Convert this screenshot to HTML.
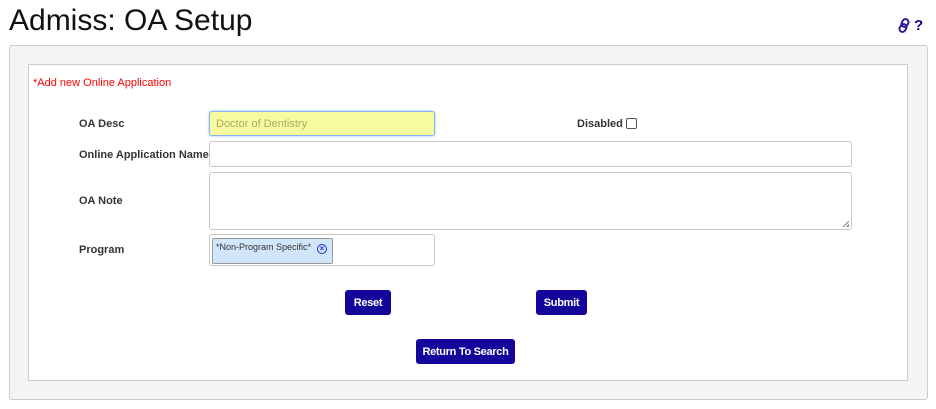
<!DOCTYPE html>
<html><head><style>
body{margin:0;width:936px;height:409px;background:#fff;font-family:"Liberation Sans",sans-serif;position:relative;overflow:hidden}
.a{position:absolute;white-space:nowrap}
h1{position:absolute;left:9px;top:4px;margin:0;font-weight:normal;font-size:30px;color:#111;letter-spacing:0px}
.outer{left:9px;top:45px;width:917px;height:353px;border:1px solid #ccc;border-radius:3px;background:#f4f4f4}
.inner{left:28px;top:64px;width:878px;height:315px;border:1px solid #ccc;background:#fff}
.lbl{font-size:11px;font-weight:bold;color:#333}
.in{border:1px solid #c8c8c8;border-radius:3px;background:#fff;box-sizing:border-box}
.btn{background:#14069a;color:#fff;font-size:11px;font-weight:bold;border-radius:3px;text-align:center;line-height:26px;height:25px;letter-spacing:-0.3px}
</style></head><body>
<h1>Admiss: OA Setup</h1>
<svg class="a" style="left:897px;top:18px" width="14" height="15" viewBox="0 0 14 15"><g fill="none" stroke="#2a1aa0" stroke-width="2"><rect x="5" y="1" width="6" height="8" rx="3" transform="rotate(30 8 5)"/><rect x="3" y="6" width="6" height="8" rx="3" transform="rotate(30 6 10)"/></g></svg>
<div class="a" style="left:914px;top:17px;font-size:15px;color:#14069a;font-weight:bold">?</div>
<div class="a outer"></div>
<div class="a inner"></div>
<div class="a" style="left:33px;top:77px;font-size:11px;color:#f00">*Add new Online Application</div>
<div class="a lbl" style="left:79px;top:118px">OA Desc</div>
<div class="a in" style="left:209px;top:111px;width:226px;height:25px;background:#f7fba0;border:1px solid #8ab4f0;box-shadow:0 0 2px #8ab4f0"></div>
<div class="a" style="left:216px;top:118px;font-size:11px;color:#aaa86a">Doctor of Dentistry</div>
<div class="a lbl" style="left:577px;top:118px">Disabled</div>
<div class="a" style="left:626px;top:118px;width:9px;height:9px;border:1px solid #555;border-radius:2px"></div>
<div class="a lbl" style="left:79px;top:149px">Online Application Name</div>
<div class="a in" style="left:209px;top:141px;width:643px;height:26px"></div>
<div class="a lbl" style="left:79px;top:195px">OA Note</div>
<div class="a in" style="left:209px;top:172px;width:643px;height:58px"></div>
<div class="a" style="left:843px;top:221px;width:6px;height:6px;background:linear-gradient(135deg,transparent 45%,#888 45%,#888 55%,transparent 55%,transparent 75%,#888 75%)"></div>
<div class="a lbl" style="left:79px;top:244px">Program</div>
<div class="a in" style="left:209px;top:234px;width:226px;height:32px"></div>
<div class="a" style="left:212px;top:238px;width:119px;height:24px;background:#d1e6fb;border:1px solid #999;border-radius:2px"></div>
<div class="a" style="left:216px;top:242px;font-size:9px;color:#333">*Non-Program Specific*</div>
<div class="a" style="left:317px;top:244px;width:8px;height:8px;border:1.5px solid #1b2fd0;border-radius:50%;font-size:8px;line-height:8px;text-align:center;color:#1b2fd0;font-weight:bold">×</div>
<div class="a btn" style="left:345px;top:290px;width:46px">Reset</div>
<div class="a btn" style="left:536px;top:290px;width:51px">Submit</div>
<div class="a btn" style="left:416px;top:339px;width:99px">Return To Search</div>
</body></html>
